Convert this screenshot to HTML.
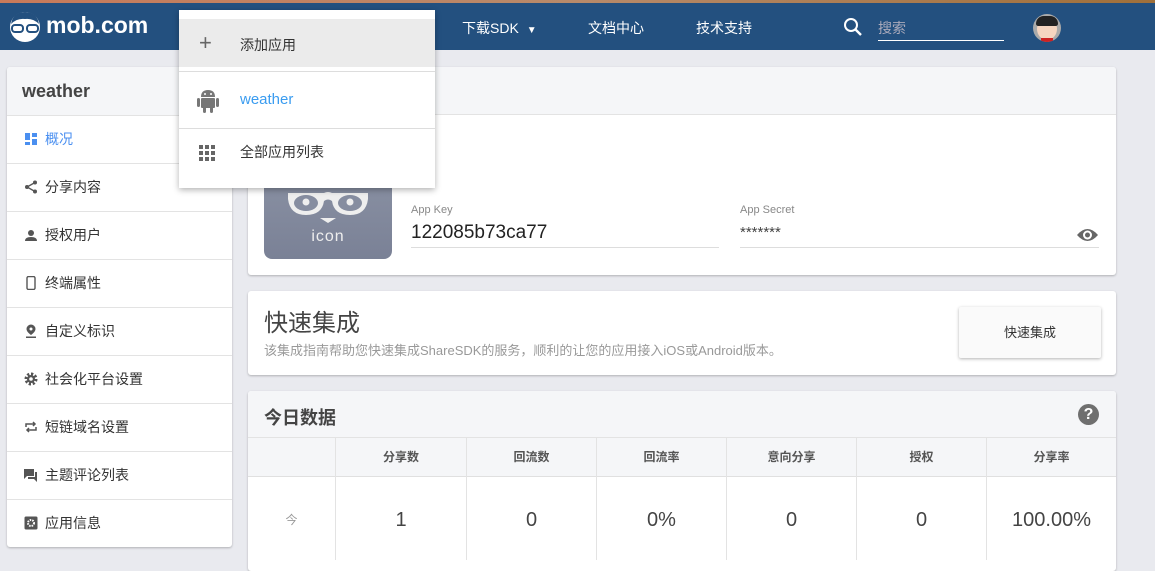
<!DOCTYPE html>
<html><head><meta charset="utf-8"><style>
*{box-sizing:border-box;margin:0;padding:0}
body{width:1155px;height:560px;overflow:hidden;background:#e9eaef;font-family:"Liberation Sans","Noto Sans CJK SC",sans-serif;position:relative;color:#333}
.abs{position:absolute}
.hdr{left:0;top:0;width:1155px;height:50px;background:#23507f}
.strip{left:0;top:0;width:1155px;height:3px;background:linear-gradient(90deg,#c87a5a,#b88a6a,#a0703a)}
.nav{color:#fff;font-size:14px;top:18px}
.card{background:#fff;border-radius:3px;box-shadow:0 1px 2px rgba(0,0,0,.25)}
.side .it{position:absolute;left:0;width:225px;height:48px;border-top:1px solid #e3e3e3;font-size:14px;color:#333;padding-left:38px;line-height:47px}
.side .ic{position:absolute;left:17px;top:16px;width:14px;height:14px}
.th{position:absolute;top:438px;height:39px;border-left:1px solid #e3e3e3;font-size:12px;color:#555;text-align:center;line-height:39px;font-weight:bold}
.td{position:absolute;top:477px;height:83px;border-left:1px solid #e3e3e3;font-size:20px;color:#444;text-align:center;line-height:86px}
</style></head><body>
<div class="abs hdr"></div>
<div class="abs strip"></div>
<!-- logo -->
<svg class="abs" style="left:7px;top:10px" width="36" height="34" viewBox="0 0 36 34"><circle cx="18" cy="17" r="15" fill="#fff"/><path d="M4 14 Q6 2 18 2 Q30 2 32 14 Q26 8 18 9 Q10 8 4 14Z" fill="#23507f"/><rect x="5" y="15" width="11" height="7" rx="3" fill="none" stroke="#23507f" stroke-width="2"/><rect x="20" y="15" width="11" height="7" rx="3" fill="none" stroke="#23507f" stroke-width="2"/></svg>
<div class="abs" style="left:46px;top:12px;color:#fff;font-size:23px;font-weight:bold;letter-spacing:0px">mob.com</div>
<div class="abs nav" style="left:462px">下载SDK <span style="font-size:10px;margin-left:4px">▼</span></div>
<div class="abs nav" style="left:588px">文档中心</div>
<div class="abs nav" style="left:696px">技术支持</div>
<svg class="abs" style="left:843px;top:17px" width="20" height="20" viewBox="0 0 20 20"><circle cx="8" cy="8" r="6" fill="none" stroke="#fff" stroke-width="2"/><path d="M12.5 12.5 L18 18" stroke="#fff" stroke-width="2.4"/></svg>
<div class="abs" style="left:878px;top:18px;font-size:14px;color:#aab">搜索</div>
<div class="abs" style="left:878px;top:40px;width:126px;height:1px;background:#fff"></div>
<div class="abs" style="left:1033px;top:14px;width:28px;height:28px;border-radius:50%;background:#aaa;overflow:hidden"><div style="position:absolute;left:4px;top:4px;width:20px;height:22px;border-radius:50%;background:#f5d5c0"></div><div style="position:absolute;left:3px;top:2px;width:22px;height:10px;border-radius:10px 10px 3px 3px;background:#222"></div><div style="position:absolute;left:8px;top:24px;width:12px;height:6px;background:#c22"></div></div>

<!-- sidebar -->
<div class="abs card side" style="left:7px;top:67px;width:225px;height:480px;overflow:hidden">
<div style="height:48px;background:#f5f6f8;font-size:18px;font-weight:bold;color:#444;padding:14px 0 0 15px">weather</div>
<div class="it" style="top:48px;color:#4a8ff0"><svg class="ic" viewBox="0 0 14 14"><rect x="1" y="1" width="5" height="7" fill="#4a8ff0"/><rect x="8" y="1" width="5" height="4" fill="#4a8ff0"/><rect x="1" y="10" width="5" height="3" fill="#4a8ff0"/><rect x="8" y="7" width="5" height="6" fill="#4a8ff0"/></svg>概况</div>
<div class="it" style="top:96px"><svg class="ic" viewBox="0 0 14 14"><circle cx="11" cy="2.5" r="2" fill="#555"/><circle cx="3" cy="7" r="2" fill="#555"/><circle cx="11" cy="11.5" r="2" fill="#555"/><path d="M11 2.5 3 7 11 11.5" stroke="#555" fill="none" stroke-width="1.3"/></svg>分享内容</div>
<div class="it" style="top:144px"><svg class="ic" viewBox="0 0 14 14"><circle cx="7" cy="5" r="3" fill="#555"/><path d="M1 13 Q1 9 7 9 Q13 9 13 13Z" fill="#555"/></svg>授权用户</div>
<div class="it" style="top:192px"><svg class="ic" viewBox="0 0 14 14"><rect x="3" y="0.5" width="8" height="13" rx="1.5" fill="none" stroke="#555" stroke-width="1.4"/></svg>终端属性</div>
<div class="it" style="top:240px"><svg class="ic" viewBox="0 0 14 14"><path d="M7 0.5 A4.5 4.5 0 0 1 11.5 5 C11.5 8 7 11 7 11 C7 11 2.5 8 2.5 5 A4.5 4.5 0 0 1 7 0.5Z" fill="#555"/><circle cx="7" cy="5" r="1.5" fill="#fff"/><rect x="2" y="12.5" width="10" height="1.5" fill="#555"/></svg>自定义标识</div>
<div class="it" style="top:288px"><svg class="ic" viewBox="0 0 14 14"><circle cx="7" cy="7" r="5" fill="none" stroke="#555" stroke-width="3" stroke-dasharray="2.2 1.7"/><circle cx="7" cy="7" r="4" fill="#555"/><circle cx="7" cy="7" r="1.8" fill="#fff"/></svg>社会化平台设置</div>
<div class="it" style="top:336px"><svg class="ic" viewBox="0 0 14 14"><path d="M2 7 V4 H11 M9 2 L11 4 9 6 M12 7 V10 H3 M5 8 L3 10 5 12" stroke="#555" fill="none" stroke-width="1.5"/></svg>短链域名设置</div>
<div class="it" style="top:384px"><svg class="ic" viewBox="0 0 14 14"><path d="M0 1 H10 V8 H3 L0 11Z" fill="#555"/><path d="M11 4 H13 V14 L10 11 H4 V9 H11Z" fill="#555"/></svg>主题评论列表</div>
<div class="it" style="top:432px"><svg class="ic" viewBox="0 0 14 14"><rect x="0.5" y="0.5" width="13" height="13" rx="1.5" fill="#555"/><circle cx="7" cy="7" r="3" fill="none" stroke="#fff" stroke-width="2" stroke-dasharray="1.5 1"/></svg>应用信息</div>
</div>

<!-- card 1 -->
<div class="abs card" style="left:248px;top:67px;width:868px;height:208px;overflow:hidden">
<div style="height:48px;background:#f5f6f8;border-bottom:1px solid #e3e3e3"></div>
</div>
<div class="abs" style="left:264px;top:165px;width:128px;height:94px;border-radius:8px;background:linear-gradient(#8b92a4,#7a8196)"></div>
<svg class="abs" style="left:286px;top:185px" width="84" height="40" viewBox="0 0 84 40"><path d="M2 8 H38 Q42 6 46 8 H82 V14 Q80 30 64 30 Q48 30 46 16 Q42 13 38 16 Q36 30 20 30 Q4 30 2 14Z" fill="#eee"/><ellipse cx="20" cy="18" rx="12" ry="8" fill="#868da0"/><ellipse cx="64" cy="18" rx="12" ry="8" fill="#868da0"/><circle cx="20" cy="17" r="3.5" fill="#eee"/><circle cx="64" cy="17" r="3.5" fill="#eee"/><path d="M34 33 H50 L42 38Z" fill="#eee"/></svg>
<div class="abs" style="left:264px;top:228px;width:128px;text-align:center;color:#eee;font-size:16px;letter-spacing:1px">icon</div>
<div class="abs" style="left:411px;top:204px;font-size:11px;color:#888">App Key</div>
<div class="abs" style="left:411px;top:222px;font-size:19px;color:#222">122085b73ca77</div>
<div class="abs" style="left:411px;top:247px;width:308px;height:1px;background:#ddd"></div>
<div class="abs" style="left:740px;top:204px;font-size:11px;color:#888">App Secret</div>
<div class="abs" style="left:740px;top:224px;font-size:15px;color:#444">*******</div>
<div class="abs" style="left:740px;top:247px;width:359px;height:1px;background:#ddd"></div>
<svg class="abs" style="left:1076px;top:226px" width="23" height="18" viewBox="0 0 23 18"><path d="M1 9 Q11.5 -3 22 9 Q11.5 21 1 9Z" fill="#666"/><circle cx="11.5" cy="9" r="4.5" fill="#fff"/><circle cx="11.5" cy="9" r="2.5" fill="#666"/></svg>

<!-- dropdown -->
<div class="abs" style="left:179px;top:10px;width:256px;height:178px;background:#fff;box-shadow:0 2px 6px rgba(0,0,0,.3)">
<div style="position:absolute;top:9px;left:0;width:256px;height:48px;background:#ebebeb"></div>
<div style="position:absolute;top:61px;left:0;width:256px;height:1px;background:#ddd"></div>
<div style="position:absolute;top:118px;left:0;width:256px;height:1px;background:#ddd"></div>
<div style="position:absolute;left:20px;top:21px;font-size:22px;color:#666;line-height:24px">+</div>
<div style="position:absolute;left:61px;top:25px;font-size:14px;color:#333">添加应用</div>
<svg style="position:absolute;left:18px;top:78px" width="22" height="25" viewBox="0 0 22 25"><path d="M4 9 Q4 2 11 2 Q18 2 18 9Z" fill="#777"/><rect x="4" y="10" width="14" height="10" rx="1" fill="#777"/><rect x="0" y="10" width="3" height="9" rx="1.5" fill="#777"/><rect x="19" y="10" width="3" height="9" rx="1.5" fill="#777"/><rect x="6" y="19" width="3" height="6" rx="1.5" fill="#777"/><rect x="13" y="19" width="3" height="6" rx="1.5" fill="#777"/><circle cx="8" cy="6" r="1" fill="#fff"/><circle cx="14" cy="6" r="1" fill="#fff"/></svg>
<div style="position:absolute;left:61px;top:81px;font-size:15px;color:#3a9cf0">weather</div>
<svg style="position:absolute;left:20px;top:135px" width="16" height="16" viewBox="0 0 16 16" fill="#666"><rect x="0" y="0" width="4" height="4"/><rect x="6" y="0" width="4" height="4"/><rect x="12" y="0" width="4" height="4"/><rect x="0" y="6" width="4" height="4"/><rect x="6" y="6" width="4" height="4"/><rect x="12" y="6" width="4" height="4"/><rect x="0" y="12" width="4" height="4"/><rect x="6" y="12" width="4" height="4"/><rect x="12" y="12" width="4" height="4"/></svg>
<div style="position:absolute;left:61px;top:132px;font-size:14px;color:#333">全部应用列表</div>
</div>

<!-- card 2 -->
<div class="abs card" style="left:248px;top:291px;width:868px;height:84px"></div>
<div class="abs" style="left:264px;top:303px;font-size:24px;color:#444">快速集成</div>
<div class="abs" style="left:264px;top:340px;font-size:13px;color:#999">该集成指南帮助您快速集成ShareSDK的服务，顺利的让您的应用接入iOS或Android版本。</div>
<div class="abs" style="left:959px;top:307px;width:142px;height:51px;background:#fafafa;box-shadow:0 1px 3px rgba(0,0,0,.3);border-radius:2px;text-align:center;line-height:51px;font-size:13px;color:#333">快速集成</div>

<!-- card 3 -->
<div class="abs card" style="left:248px;top:391px;width:868px;height:180px;overflow:hidden">
<div style="height:47px;background:#f5f6f8;border-bottom:1px solid #e3e3e3"></div>
<div style="height:39px;background:#f5f6f8;border-bottom:1px solid #e0e0e0"></div>
</div>
<div class="abs" style="left:264px;top:404px;font-size:18px;font-weight:bold;color:#444">今日数据</div>
<div class="abs" style="left:1078px;top:404px;width:21px;height:21px;border-radius:50%;background:#6f6f6f;color:#fff;font-size:16px;font-weight:bold;text-align:center;line-height:21px">?</div>
<div class="th" style="left:335px;width:131px">分享数</div>
<div class="th" style="left:466px;width:130px">回流数</div>
<div class="th" style="left:596px;width:130px">回流率</div>
<div class="th" style="left:726px;width:130px">意向分享</div>
<div class="th" style="left:856px;width:130px">授权</div>
<div class="th" style="left:986px;width:130px">分享率</div>
<div class="td" style="left:248px;width:87px;border:none;font-size:12px;color:#999">今</div>
<div class="td" style="left:335px;width:131px">1</div>
<div class="td" style="left:466px;width:130px">0</div>
<div class="td" style="left:596px;width:130px">0%</div>
<div class="td" style="left:726px;width:130px">0</div>
<div class="td" style="left:856px;width:130px">0</div>
<div class="td" style="left:986px;width:130px">100.00%</div>
</body></html>
